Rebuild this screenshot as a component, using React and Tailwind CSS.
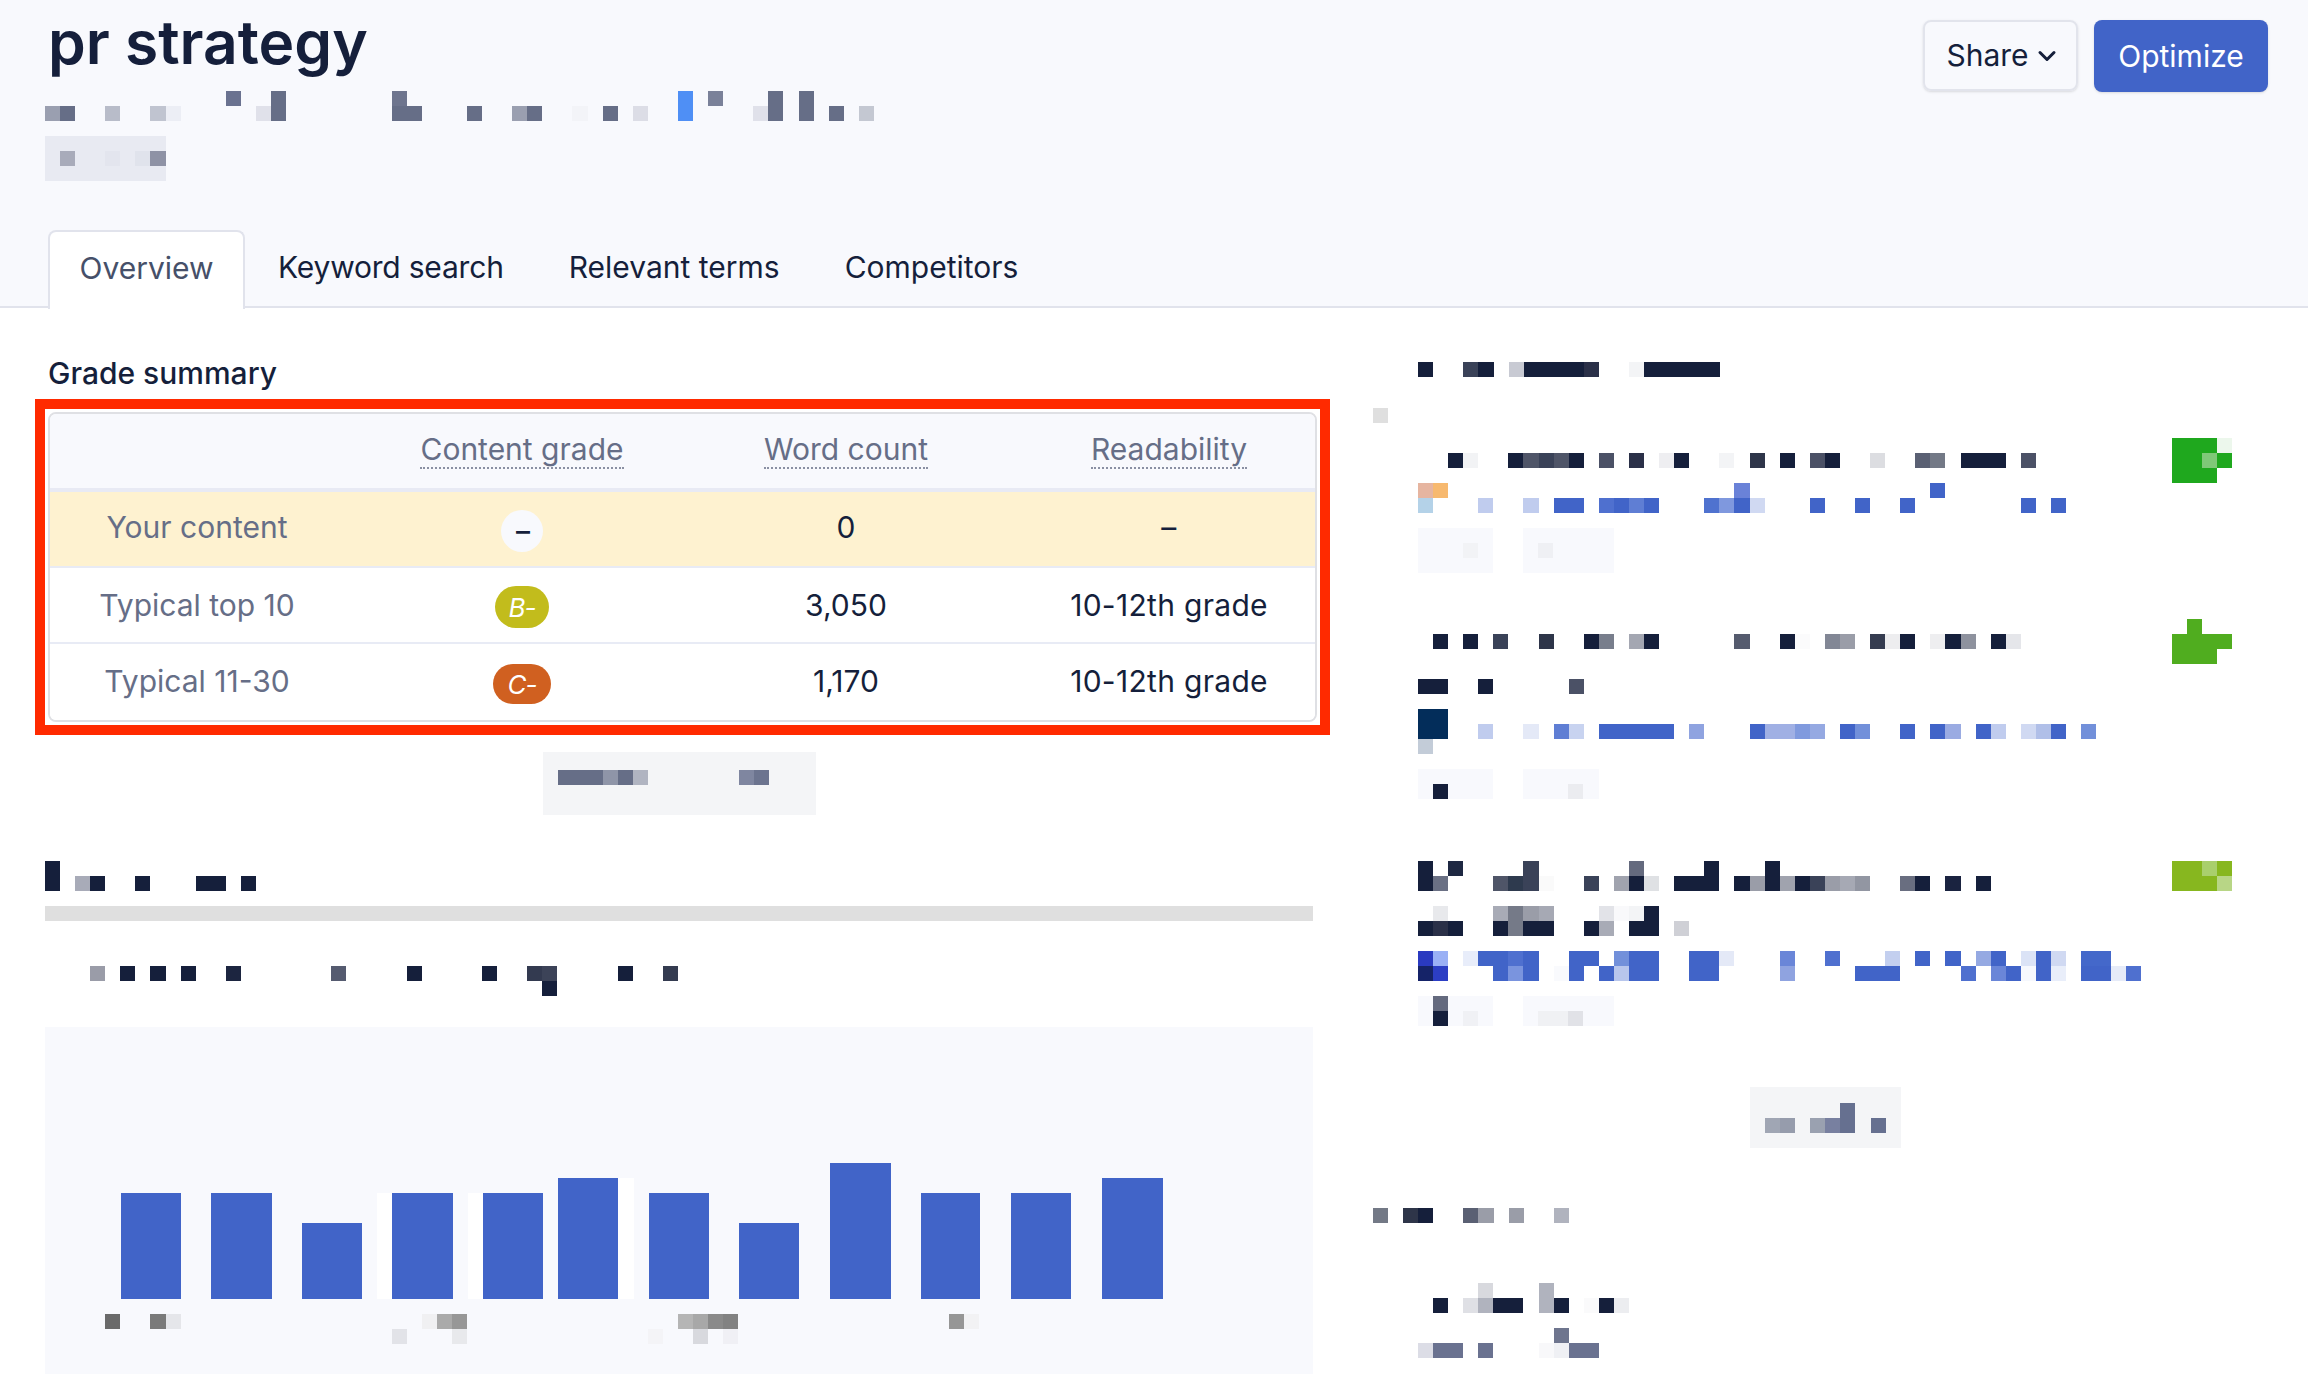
import React from "react";
import { ChevronDown } from "lucide-react";

// pixelated (blurred out) content is drawn as cells of 15px: [row, col, color, span]
const CW = 15.07;
const CH = 15;
const D = "#151f3b";
const B = "#4164c8";
const S = "#666e87";

const Mosaic = ({ cols, rows, cells, className = "" }) => (
  <svg width={cols * CW} height={rows * CH} shapeRendering="crispEdges" className={`block shrink-0 ${className}`}>
    {cells.map(([r, c, color, span = 1], i) => (
      <rect key={i} x={c * CW} y={r * CH} width={span * CW} height={CH} fill={color} />
    ))}
  </svg>
);

const headerLine = [
  [0, 12, "#6a7290"], [0, 15, S], [0, 23, "#6e758e"], [0, 42, "#4f8ff5"], [0, 44, "#7a8199"], [0, 48, S], [0, 50, S],
  [1, 0, "#9a9fb0"], [1, 1, S], [1, 4, "#b8bcc9"], [1, 7, "#c0c4d0"], [1, 8, "#eceef5"],
  [1, 14, "#e0e1ea"], [1, 15, S], [1, 23, S, 2], [1, 28, S], [1, 31, "#9a9fb0"], [1, 32, S], [1, 35, "#f3f4f8"],
  [1, 37, S], [1, 39, "#dcdde6"], [1, 42, "#4f8ff5"], [1, 47, "#e0e1ea"], [1, 48, S], [1, 50, S],
  [1, 52, S], [1, 54, "#c4c8d2"],
];

const sectionTitle = [
  [0, 0, D], [1, 0, D], [1, 2, "#a8abb8"], [1, 3, D], [1, 6, D], [1, 10, D, 2], [1, 13, D],
];

const sectionText = [
  [0, 3, "#9a9ca8"], [0, 5, D], [0, 7, D], [0, 9, D], [0, 12, "#1c2540"], [0, 19, "#555b70"], [0, 24, D], [0, 29, D],
  [0, 32, "#333a50"], [0, 33, "#3c4358"], [0, 38, D], [0, 41, "#343b50"], [1, 33, D],
];

const bars = [
  [121, 60, 106], [211, 61, 106], [302, 60, 76], [392, 61, 106], [483, 60, 106], [558, 60, 121],
  [649, 60, 106], [739, 60, 76], [830, 61, 136], [921, 59, 106], [1011, 60, 106], [1102, 61, 121],
];

const chartLabels = [
  [0, 4, "#6a6a6a"], [0, 7, "#7a7a7a"], [0, 8, "#e5e6ea"], [0, 25, "#f0f0f2"], [0, 26, "#aaaaaa"], [0, 27, "#979797"],
  [0, 42, "#b5b5b5"], [0, 43, "#a8a8a8"], [0, 44, "#8a8a8a"], [0, 45, "#828282"], [0, 60, "#969696"], [0, 61, "#f2f2f4"],
  [1, 23, "#e2e3e8"], [1, 27, "#e8e9ec"], [1, 40, "#f4f4f7"], [1, 43, "#d8d9de"], [1, 45, "#f0f0f5"],
];

const rightTitle = [
  [0, 3, D], [0, 6, "#3a4258"], [0, 7, D], [0, 9, "#c8cad3"], [0, 10, D, 4], [0, 14, "#2a3048"], [0, 17, "#f3f4f6"], [0, 18, D, 5],
];

const card1 = [
  [1, 2, D], [1, 3, "#f2f3f5"], [1, 6, D], [1, 7, "#4f5568"], [1, 8, "#3a4258"], [1, 9, "#4f5568"], [1, 10, D],
  [1, 12, "#4b5166"], [1, 14, "#2a3048"], [1, 16, "#eeeef1"], [1, 17, D], [1, 20, "#f3f4f6"], [1, 22, "#2e3549"],
  [1, 24, D], [1, 26, "#4b5166"], [1, 27, D], [1, 30, "#dcdde1"], [1, 33, "#5a6073"], [1, 34, "#737986"], [1, 36, D, 3], [1, 40, "#4b5166"],
  [3, 0, "#e6b5a0"], [3, 1, "#f7b96f"], [3, 21, "#6a82d8"], [3, 34, B],
  [4, 0, "#b4d2e8"], [4, 4, "#c0ccee"], [4, 7, "#c0ccee"], [4, 9, B, 2], [4, 12, "#4f70cf"], [4, 13, B], [4, 14, "#5f7ed4"], [4, 15, B],
  [4, 19, "#4f72cf"], [4, 20, "#7f98de"], [4, 21, B], [4, 22, "#d0d9f2"], [4, 26, B], [4, 29, B], [4, 32, B], [4, 40, B], [4, 42, B],
];
const grade1 = [
  [0, 0, "#1fa81e", 3], [0, 3, "#ecf7ec"], [1, 0, "#1fa81e", 2], [1, 2, "#80c878"], [1, 3, "#1fa81e"], [2, 0, "#1fa81e", 3],
];

const card2 = [
  [1, 1, D], [1, 3, D], [1, 5, "#3a4258"], [1, 8, "#2e3549"], [1, 11, D], [1, 12, "#787e8c"], [1, 14, "#a4a7b2"], [1, 15, D],
  [1, 21, "#555b6e"], [1, 24, D], [1, 25, "#fbfbfc"], [1, 27, "#828795"], [1, 28, "#9a9da8"], [1, 30, "#353c50"], [1, 31, "#ededef"],
  [1, 32, D], [1, 34, "#eeeef0"], [1, 35, D], [1, 36, "#8e929e"], [1, 38, D], [1, 39, "#e5e6ea"],
  [4, 0, D, 2], [4, 4, D], [4, 10, "#4b5166"],
  [6, 0, "#032d5a", 2],
  [7, 0, "#032d5a", 2], [7, 4, "#c0ccee"], [7, 7, "#e4e9f7"], [7, 9, "#5f7ed4"], [7, 10, "#c8d3f0"], [7, 12, B, 5], [7, 18, "#8fa3e0"],
  [7, 22, B], [7, 23, "#a0b0e4", 2], [7, 25, "#809ade"], [7, 26, "#95a9e2"], [7, 28, B], [7, 29, "#7290da"], [7, 32, B], [7, 34, B],
  [7, 35, "#9aabe2"], [7, 37, B], [7, 38, "#c0ccee"], [7, 40, "#d0d9f2"], [7, 41, "#b0bfe8"], [7, 42, B], [7, 44, "#7290da"],
  [8, 0, "#c3ccd8"],
];
const grade2 = [
  [0, 1, "#50ad1f"], [1, 0, "#50ad1f", 4], [2, 0, "#50ad1f", 3],
];

const card3 = [
  [0, 0, D], [0, 2, "#1e2842"], [0, 7, "#3a4258"], [0, 14, "#646a7e"], [0, 19, D], [0, 23, D],
  [1, 0, D], [1, 1, "#6a7084"], [1, 5, "#4f5568"], [1, 6, "#2e3a4e"], [1, 7, "#3a4258"], [1, 8, "#fafafa"], [1, 11, "#3a4258"],
  [1, 13, "#a0a3ae"], [1, 14, D], [1, 15, "#dfe1e4"], [1, 17, D, 3], [1, 21, D], [1, 22, "#9a9da8"], [1, 23, D], [1, 24, "#a0a3ae"],
  [1, 25, D], [1, 26, "#3a4258"], [1, 27, "#9a9da8"], [1, 28, "#a6a9b4"], [1, 29, "#9296a2"], [1, 32, "#696e80"], [1, 33, D], [1, 35, "#1a2340"], [1, 37, D],
  [3, 1, "#e8e9ec"], [3, 5, "#a8abb6"], [3, 6, "#757a88"], [3, 7, "#9a9da8"], [3, 8, "#a6a9b4"], [3, 12, "#e2e3e8"], [3, 13, "#f9f9fb"], [3, 14, "#f3f4f6"], [3, 15, D],
  [4, 0, D], [4, 1, "#2a3048"], [4, 2, D], [4, 5, D], [4, 6, "#757a88"], [4, 7, D, 2], [4, 11, D], [4, 12, "#a8abb6"], [4, 14, D, 2], [4, 17, "#cfd0d6"],
  [6, 0, "#2a3ac0"], [6, 1, "#9ab0f5"], [6, 3, "#e8edfa"], [6, 4, B, 2], [6, 6, "#4f70cf"], [6, 7, B], [6, 10, B, 2], [6, 13, "#7290da"], [6, 14, B, 2],
  [6, 18, B, 2], [6, 20, "#e4e9f7"], [6, 24, "#6a86d8"], [6, 27, "#4f70cf"], [6, 31, "#c3cfef"], [6, 33, B], [6, 35, B], [6, 37, "#95a9e2"], [6, 38, B],
  [6, 40, "#dbe3f6"], [6, 41, B], [6, 42, "#d0d9f2"], [6, 44, "#4468ca", 2],
  [7, 0, "#152368"], [7, 1, "#2c3ec4"], [7, 5, B], [7, 6, "#7a94de"], [7, 7, B], [7, 9, "#f9fafd"], [7, 10, B], [7, 12, B], [7, 13, "#b8c6ec"], [7, 14, B, 2],
  [7, 18, B, 2], [7, 24, "#8fa3e0"], [7, 29, B, 3], [7, 36, "#4f70cf"], [7, 38, "#6a86d8"], [7, 39, B], [7, 40, "#f6f8fd"], [7, 41, B], [7, 42, "#e9eefa"],
  [7, 44, B, 2], [7, 46, "#e6ebf8"], [7, 47, "#4f70cf"],
];
const grade3 = [
  [0, 0, "#87b71f", 2], [0, 2, "#a9cf6c"], [0, 3, "#87b71f"], [1, 0, "#87b71f", 3], [1, 3, "#b8d686"],
];

const moreTitle = [
  [0, 0, "#737986"], [0, 2, "#2e3549"], [0, 3, D], [0, 6, "#5a6073"], [0, 7, "#9a9da8"], [0, 9, "#9a9da8"], [0, 12, "#b0b3be"],
];
const moreRows = [
  [0, 4, "#d8d9de"], [0, 8, "#b0b3be"],
  [1, 1, D], [1, 3, "#dfe0e5"], [1, 4, "#b0b3be"], [1, 5, D, 2], [1, 8, "#b0b3be"], [1, 9, D], [1, 11, "#fafafb"], [1, 12, D], [1, 13, "#ecedf0"],
  [3, 9, "#6e758e"],
  [4, 0, "#dcdde6"], [4, 1, "#6a7290", 2], [4, 4, "#6a7290"], [4, 8, "#f8f8fa"], [4, 9, "#eff0f4"], [4, 10, "#6a7290", 2],
];

const GradeBadge = ({ grade }) => {
  if (grade === "B-")
    return <span className="flex h-[42px] w-[54px] items-center justify-center rounded-full bg-[#c2bc1c] text-[26px] italic tracking-[-1px] text-white">B-</span>;
  if (grade === "C-")
    return <span className="flex h-[40px] w-[58px] items-center justify-center rounded-full bg-[#d06020] text-[26px] italic tracking-[-1px] text-white">C-</span>;
  return <span className="flex h-[42px] w-[42px] items-center justify-center rounded-full bg-[#f8f9fd] pl-[2px] text-[28px] font-medium text-[#151f3b]">–</span>;
};

const rows = [
  { label: "Your content", grade: "-", words: "0", read: "–", bg: "bg-[#fef2d0]", h: "h-[74px]", shift: "pb-[3px]" },
  { label: "Typical top 10", grade: "B-", words: "3,050", read: "10-12th grade", bg: "bg-white", h: "h-[74px]", shift: "" },
  { label: "Typical 11-30", grade: "C-", words: "1,170", read: "10-12th grade", bg: "bg-white", h: "h-[76px]", shift: "pb-[2px]" },
];

const colClass = "grid grid-cols-[325px_294px_354px_292px] items-center text-center";

const HeadCell = ({ children }) => (
  <div className="flex justify-center">
    <span className="border-b-2 border-dotted border-[#8a90a3] pb-[2px] leading-[32px]">{children}</span>
  </div>
);

const Card = ({ text, rowsCount, grade, gradeRows, chips, className = "" }) => (
  <div className={className}>
    <div className="flex items-start justify-between">
      <Mosaic cols={48} rows={rowsCount} cells={text} />
      <Mosaic cols={4} rows={gradeRows} cells={grade} className="mr-[76px]" />
    </div>
    <div className="mt-[15px] flex gap-[30px]">{chips}</div>
  </div>
);

const App = () => {
  return (
    <div className="flex h-screen flex-col overflow-hidden bg-white font-['Inter',sans-serif] text-[30px] text-[#151f3b]">
      <div className="h-[308px] shrink-0 border-b-2 border-[#e1e3ec] bg-[#f8f9fd]">
        <div className="flex items-start justify-between pl-[45px] pr-[40px]">
          <div>
            <h1 className="ml-[3px] mt-[7px] text-[60.5px] font-semibold leading-[70px]">pr strategy</h1>
            <Mosaic cols={55} rows={2} cells={headerLine} className="mt-[14px]" />
            <Mosaic
              cols={8}
              rows={3}
              cells={[[1, 1, "#a8abba"], [1, 4, "#e3e5ee"], [1, 6, "#e0e3ec"], [1, 7, "#8e92a5"]]}
              className="mt-[15px] bg-[#e8eaf2]"
            />
          </div>
          <div className="mt-[20px] flex gap-[16px]">
            <button className="flex h-[71px] w-[155px] items-center justify-center gap-[4px] rounded-[8px] border-2 border-[#e2e4ec] pl-[6px] shadow-sm">
              Share
              <ChevronDown size={28} strokeWidth={2.6} />
            </button>
            <button className="h-[72px] w-[174px] rounded-[8px] bg-[#4164c8] text-white shadow-sm">Optimize</button>
          </div>
        </div>
        <div className="mt-[49px] flex pl-[48px]">
          <div className="flex h-[79px] w-[197px] items-center justify-center rounded-t-[8px] border-2 border-b-0 border-[#e1e3ec] bg-white pb-[5px] text-[#465069]">
            Overview
          </div>
          <div className="flex h-[77px] items-center pb-[3px] pl-[33px] tracking-[-0.2px]">Keyword search</div>
          <div className="flex h-[77px] items-center pb-[3px] pl-[65px]">Relevant terms</div>
          <div className="flex h-[77px] items-center pb-[3px] pl-[65px]">Competitors</div>
        </div>
      </div>

      <div className="flex min-h-0 flex-1">
        <div className="flex w-[1350px] shrink-0 flex-col pl-[35px] pr-[20px]">
          <h2 className="ml-[13px] mt-[47px] text-[30px] font-medium leading-[36px]">Grade summary</h2>
          <div className="mt-[8px] border-[10px] border-[#ff2a00] p-[3px]">
            <div className="overflow-hidden rounded-[8px] border-2 border-[#dfe0e4]">
              <div className={`${colClass} box-content h-[74px] border-b-4 border-[#e8eaf4] bg-[#f8f9fd] text-[#666e87]`}>
                <div />
                <HeadCell>Content grade</HeadCell>
                <HeadCell>Word count</HeadCell>
                <HeadCell>Readability</HeadCell>
              </div>
              {rows.map((row, i) => (
                <div key={row.label} className={`${colClass} ${row.h} ${row.bg} ${i < 2 ? "box-content border-b-2 border-[#e8ebf5]" : ""}`}>
                  <div className={`pr-[31px] text-[#666e87] ${row.shift}`}>{row.label}</div>
                  <div className="flex justify-center pt-[4px]">
                    <GradeBadge grade={row.grade} />
                  </div>
                  <div className={row.shift}>{row.words}</div>
                  <div className={`tracking-[0.3px] ${row.shift}`}>{row.read}</div>
                </div>
              ))}
            </div>
          </div>

          <div className="ml-[-6px] mt-[17px] flex h-[63px] w-[273px] items-center self-center bg-[#f4f5f7] pb-[13px] pl-[15px]">
            <Mosaic
              cols={14}
              rows={1}
              cells={[[0, 0, S, 3], [0, 3, "#8f95a8"], [0, 4, S], [0, 5, "#b0b4c1"], [0, 12, "#7f86a0"], [0, 13, "#6c748f"]]}
            />
          </div>

          <div className="ml-[10px] mr-[17px] flex min-h-0 flex-1 flex-col">
            <Mosaic cols={14} rows={2} cells={sectionTitle} className="mt-[46px]" />
            <div className="mt-[15px] h-[15px] shrink-0 bg-[#dfdfdf]" />
            <Mosaic cols={42} rows={2} cells={sectionText} className="mt-[45px]" />
            <div className="mt-[31px] flex-1 bg-[#f8f9fd]">
              <svg width="1268" height="347" shapeRendering="crispEdges" className="block">
                <rect x="332" y="166" width="15" height="106" fill="#ffffff" />
                <rect x="423" y="166" width="15" height="106" fill="#ffffff" />
                <rect x="573" y="151" width="16" height="121" fill="#ffffff" />
                {bars.map(([x, w, h]) => (
                  <rect key={x} x={x - 45} y={272 - h} width={w} height={h} fill={B} />
                ))}
                {chartLabels.map(([r, c, color], i) => (
                  <rect key={i} x={c * CW} y={287 + r * CH} width={CW} height={CH} fill={color} />
                ))}
              </svg>
            </div>
          </div>
        </div>

        <div className="min-w-0 flex-1 pl-[23px]">
          <Mosaic cols={23} rows={1} cells={rightTitle} className="mt-[54px]" />
          <Mosaic cols={1} rows={1} cells={[[0, 0, "#dfdfdf"]]} className="mt-[31px]" />
          <div className="pl-[45px]">
            <Card
              className="mt-[15px]"
              text={card1}
              rowsCount={5}
              grade={grade1}
              gradeRows={3}
              chips={
                <>
                  <Mosaic cols={5} rows={3} cells={[[1, 3, "#f2f3f6"]]} className="bg-[#f8f9fd]" />
                  <Mosaic cols={6} rows={3} cells={[[1, 1, "#eff0f4"]]} className="bg-[#f8f9fd]" />
                </>
              }
            />
            <Card
              className="mt-[46px]"
              text={card2}
              rowsCount={9}
              grade={grade2}
              gradeRows={3}
              chips={
                <>
                  <Mosaic cols={5} rows={2} cells={[[1, 1, D]]} className="bg-[#f8f9fd]" />
                  <Mosaic cols={5} rows={2} cells={[[1, 3, "#ebecf0"]]} className="bg-[#f8f9fd]" />
                </>
              }
            />
            <Card
              className="mt-[62px]"
              text={card3}
              rowsCount={8}
              grade={grade3}
              gradeRows={2}
              chips={
                <>
                  <Mosaic cols={5} rows={2} cells={[[0, 1, "#646a7e"], [1, 1, D], [1, 3, "#f0f1f5"]]} className="bg-[#f8f9fd]" />
                  <Mosaic cols={6} rows={2} cells={[[1, 1, "#f0f1f4", 2], [1, 3, "#e1e2e7"]]} className="bg-[#f8f9fd]" />
                </>
              }
            />
          </div>

          <div className="ml-[377px] mt-[61px] flex h-[61px] w-[151px] items-center bg-[#f4f5f7] pt-[1px]">
            <Mosaic
              cols={9}
              rows={2}
              cells={[[0, 6, "#667090"], [1, 1, "#a0a6b4"], [1, 2, "#969cac"], [1, 4, "#9aa1b0"], [1, 5, "#7880a0"], [1, 6, "#667090"], [1, 8, "#667090"]]}
            />
          </div>

          <Mosaic cols={13} rows={1} cells={moreTitle} className="mt-[60px]" />
          <Mosaic cols={14} rows={5} cells={moreRows} className="ml-[45px] mt-[60px]" />
        </div>
      </div>
    </div>
  );
};

export default App;
